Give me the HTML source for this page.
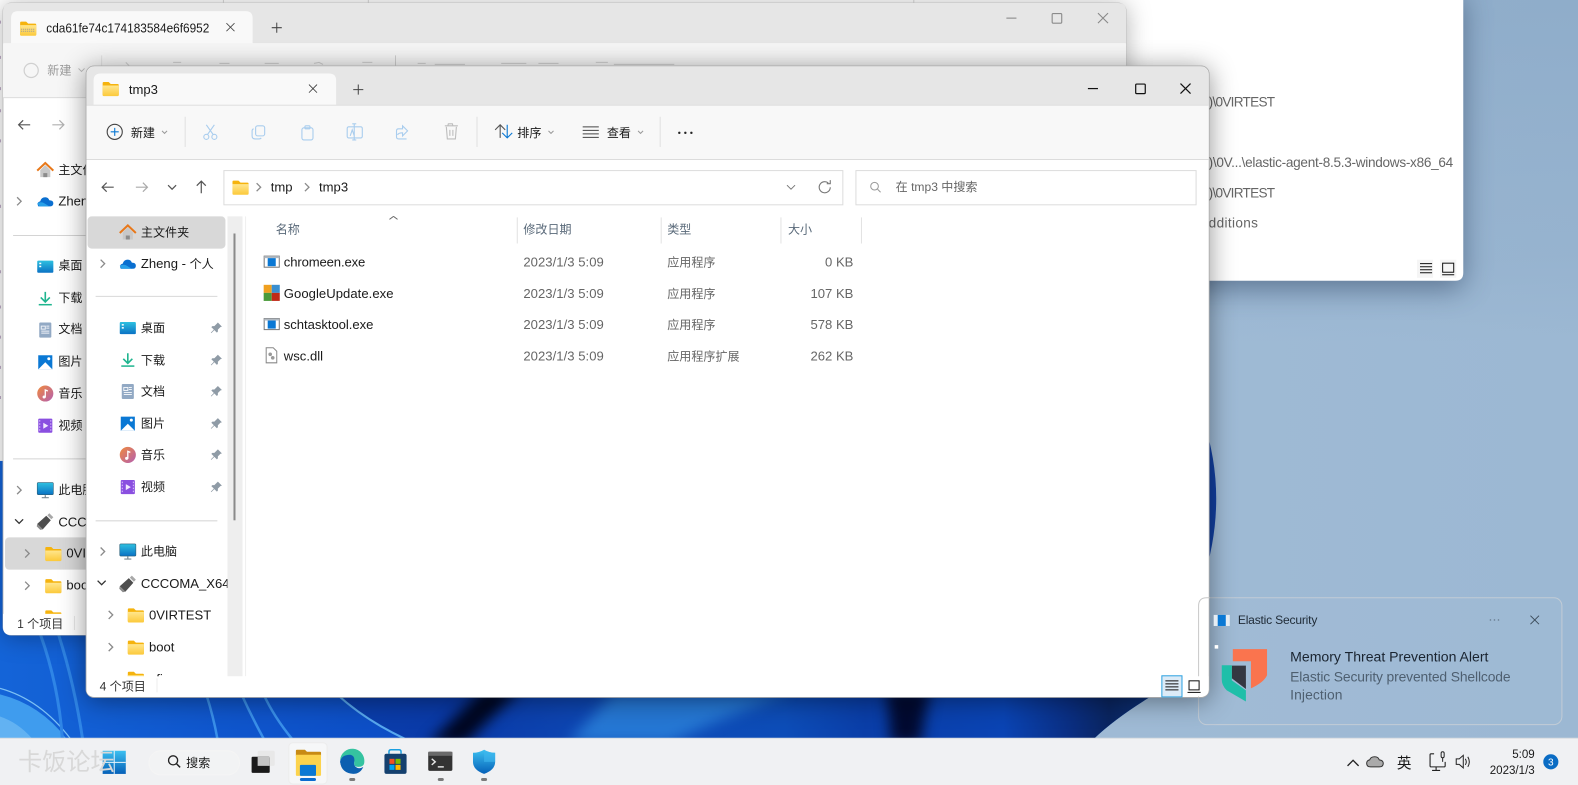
<!DOCTYPE html>
<html><head><meta charset="utf-8"><title>tmp3</title>
<style>
html,body{margin:0;padding:0;background:#a0bbd5;overflow:hidden}
svg{display:block;position:absolute;left:0;top:0}
text{font-family:"Liberation Sans","Noto Sans CJK SC",sans-serif;font-size:13px;fill:#1a1a1a}
.g{fill:#666}.c{font-size:12px}
.i{fill:none;stroke:#555;stroke-width:1.2}
</style></head><body>
<svg width="1578" height="785" viewBox="0 0 1568 780" xmlns="http://www.w3.org/2000/svg">
<defs>
<linearGradient id="wp" x1="0" x2="1" y1="0" y2="0"><stop offset="0" stop-color="#a6c0da"/><stop offset="1" stop-color="#9cb8d3"/></linearGradient>
<linearGradient id="top" x1="0" x2="0" y1="0" y2="1"><stop offset="0" stop-color="#7f9fbf" stop-opacity=".45"/><stop offset=".75" stop-color="#8aa8c6" stop-opacity=".3"/><stop offset="1" stop-color="#8aa8c6" stop-opacity="0"/></linearGradient>
<linearGradient id="bandL" x1="0" x2="1" y1="0" y2="0">
<stop offset="0" stop-color="#1464d8"/><stop offset=".2" stop-color="#0f55cc"/><stop offset=".37" stop-color="#0c4cc4"/><stop offset=".5" stop-color="#1a68d8"/><stop offset="1" stop-color="#1a70d8"/></linearGradient>
<linearGradient id="bandR" gradientUnits="userSpaceOnUse" x1="337" x2="1142" y1="0" y2="0">
<stop offset="0" stop-color="#0a3eac"/><stop offset=".14" stop-color="#0a3aa8"/><stop offset=".33" stop-color="#0e48b4"/><stop offset=".55" stop-color="#0d4db8"/><stop offset=".65" stop-color="#0a3ea8"/><stop offset=".82" stop-color="#0a44b4"/><stop offset=".9" stop-color="#0a2f84"/><stop offset=".95" stop-color="#0a2560"/><stop offset="1" stop-color="#0c2f74"/></linearGradient>
<linearGradient id="fo" x1="0" x2="0" y1="0" y2="1"><stop offset="0" stop-color="#ffe68e"/><stop offset="1" stop-color="#fcc93a"/></linearGradient>
<linearGradient id="bl" x1="0" x2="0" y1="0" y2="1"><stop offset="0" stop-color="#2ec0e0"/><stop offset="1" stop-color="#0a72c4"/></linearGradient>
<linearGradient id="mu" x1="0" x2="1" y1="0" y2="1"><stop offset="0" stop-color="#f08a3c"/><stop offset="1" stop-color="#b45fb0"/></linearGradient>
<linearGradient id="sh" x1="0" x2="0" y1="0" y2="1"><stop offset="0" stop-color="#3cc0f0"/><stop offset="1" stop-color="#0560b8"/></linearGradient>
<clipPath id="c1"><rect x="86" y="66" width="1115" height="627" rx="8"/></clipPath>
<clipPath id="c2"><rect x="86" y="560" width="140" height="40"/></clipPath>
<g id="fold"><path d="M0 2.500q0-1 1-1h5l2 2h7q1 0 1 1v9.500q0 1-1 1H1q-1 0-1-1z" fill="#f5b30e"/><path d="M0 5h16v9.500q0 1-1 1H1q-1 0-1-1z" fill="url(#fo)"/></g>
<path id="chev" d="M0 0l4 4-4 4" fill="none" stroke="#8a8a8a" stroke-width="1.300"/>
<path id="pin" d="M6.500 .5l4 4-1.500 .5-2.500 2.500v2l-1 1-2.500-2.500-3 3-.5-.5 3-3-2.500-2.500 1-1h2l2.500-2.500z" fill="#8f9ba6"/>
<g id="home"><path d="M3 8v7h10V8L8 3z" fill="#c8c8c8"/><path d="M6 15v-4h4v4z" fill="#8c8c8c"/><path d="M0 8.500L8 1l8 7.500" fill="none" stroke="#e8781a" stroke-width="2"/></g>
<g id="cld"><path d="M1 13q-2-4 2-5 1-4 5-4 3 0 4 3 4 0 4 3 0 3-3 3z" fill="#0a6fd0"/><path d="M0 10q4-2 7 0l5 3H2z" fill="#28a0e8"/></g>
<g id="desk"><rect x="0" y="2" width="16" height="12" rx="1" fill="url(#bl)"/><rect x="2" y="4" width="2" height="1.500" fill="#fff"/><rect x="2" y="7" width="2" height="1.500" fill="#fff"/></g>
<g id="dl"><path d="M8 1v9M3.500 6.500L8 11l4.500-4.500" fill="none" stroke="#1fb58f" stroke-width="1.600"/><rect x="1.500" y="13" width="13" height="1.500" fill="#1fb58f"/></g>
<g id="doc"><rect x="2" y=".5" width="12" height="15" rx="1" fill="#92a9c4"/><path d="M4 4h4v3H4zM9 4h3M9 6h3M4 9h8M4 11h8" stroke="#eef2f7" fill="none"/></g>
<g id="pic"><rect x="1" y="1" width="14" height="14" fill="#0a78d4"/><path d="M1 15l7-7 7 7z" fill="#fff"/><circle cx="11.500" cy="4.500" r="1.500" fill="#fff"/></g>
<g id="mus"><circle cx="8" cy="8" r="8" fill="url(#mu)"/><path d="M8 12V4.500l2.500 1" fill="none" stroke="#fff" stroke-width="1.300"/><circle cx="6.800" cy="11.500" r="1.500" fill="#fff"/></g>
<g id="vid"><rect x="1" y="1" width="14" height="14" rx="1" fill="#8a4fe0"/><path d="M6 5l5 3-5 3z" fill="#f2e8ff"/><path d="M2.500 2.500v11M13.500 2.500v11" stroke="#d9c4fb" stroke-dasharray="1.500 1.500"/></g>
<g id="pc"><rect x="0" y=".5" width="16" height="12" rx="1" fill="url(#bl)" stroke="#2a5f78" stroke-width=".6"/><path d="M8 13v2M4.500 15.500h7" stroke="#7a8a94" stroke-width="1.200"/></g>
<g id="usb"><path d="M0 11.500L9 3.500l4.500 4.500-8 9z" fill="#4e4e4e" transform="translate(0 -1)"/><path d="M10 2l2-2 4 4-2 2z" fill="#a8a8a8"/><path d="M0 10.500l5.500 5.500-2.500 .5-3.500-3.500z" fill="#8a8a8a"/></g>
<g id="exe"><rect x=".5" y="2.500" width="15" height="11" fill="#fff" stroke="#777"/><rect x=".5" y="2.500" width="15" height="2" fill="#b0b8c0"/><rect x="4" y="4.500" width="8" height="8" fill="#0a78d4"/></g>
<path id="x" d="M-5-5L5 5M5-5L-5 5" fill="none"/>
</defs>

<!-- wallpaper -->
<rect width="1568" height="780" fill="url(#wp)"/>
<rect x="1190" y="0" width="378" height="340" fill="url(#top)"/>
<path d="M1195 415Q1222 495 1195 578z" fill="#123fa0"/>
<path d="M0 440H1190L1142 693Q1108 714 1087 734H0z" fill="url(#bandL)"/>
<path d="M337 640V693Q365 715 405 734H1087Q1108 714 1142 693L1190 640z" fill="url(#bandR)"/>
<path d="M480 685H518Q488 712 462 740H425Q452 712 480 685Z" fill="#00061f" style="filter:blur(7px)"/>
<path d="M880 685H925Q918 712 915 740H885Q884 712 880 685Z" fill="#020a30" style="filter:blur(7px)"/>
<path d="M610 688H785Q720 712 665 738H565Z" fill="#2a80da" opacity=".85" style="filter:blur(7px)"/>
<path d="M0 690Q40 700 66 734H0z" fill="#3f9cee"/>
<path d="M0 712Q18 718 32 734H0z" fill="#62b2f2"/>
<path d="M0 684Q40 695 70 734" fill="none" stroke="#7cc0f4" stroke-width="1.200"/>
<path d="M40 630Q58 680 62 734M58 630Q74 680 82 734" fill="none" stroke="#2f85e6" stroke-width="3"/>
<path d="M205 690Q212 712 216 734M240 690Q250 712 262 734M262 690Q272 712 290 734" fill="none" stroke="#3a90ea" stroke-width="2.500"/>
<path d="M335 690Q362 715 402 734" fill="none" stroke="#58a8ee" stroke-width="2"/>

<!-- rearmost window -->
<g style="filter:drop-shadow(0 8px 14px rgba(20,40,70,.45))"><path d="M-10-10H1454V271q0 8-8 8H-10z" fill="#fff"/></g>
<path d="M222 0v4M366 0v4M908 0v4" stroke="#d8d8d8"/>
<text class="g" x="1201" y="106" textLength="66" style="font-size:13.500px">)\0VIRTEST</text>
<text class="g" x="1201" y="166" textLength="243" style="font-size:13.500px">)\0V...\elastic-agent-8.5.3-windows-x86_64</text>
<text class="g" x="1201" y="196" textLength="66" style="font-size:13.500px">)\0VIRTEST</text>
<text class="g" x="1201" y="226" textLength="49" style="font-size:13.500px">dditions</text>
<rect x="1408" y="258" width="16" height="18" fill="#f5f5f5"/><rect x="1431" y="258" width="16" height="18" fill="#f5f5f5"/>
<path d="M1411 262h12M1411 265h12M1411 268h12M1411 271h12" stroke="#111"/><rect x="1433.500" y="261.500" width="11" height="9" fill="none" stroke="#111"/><path d="M1433 273h12" stroke="#111"/>

<!-- left sliver window -->
<rect x="0" y="0" width="6" height="458" fill="#fff"/>
<path d="M0 22h1M0 57h1M0 88h1M0 110h1M0 140h1M0 205h1M0 270h1M0 305h1M0 335h1M0 365h1M0 395h1" stroke="#8a6a9a" stroke-width="3" opacity=".55"/>

<!-- window 1 -->
<g style="filter:drop-shadow(0 2px 12px rgba(0,0,0,.3))"><rect x="3" y="3" width="1116" height="628" rx="8" fill="#fff" stroke="#b5b5b5" stroke-width=".8"/></g>
<path d="M3 43V11q0-8 8-8H1111q8 0 8 8V43z" fill="#e6e6e6"/>
<rect x="3" y="43" width="1116" height="54" fill="#f6f6f6"/>
<path d="M3 97H1119" stroke="#dcdcdc"/>
<path d="M11 43V18q0-7 7-7H244q7 0 7 7V43z" fill="#f9f9f9"/>
<g transform="translate(20 20)"><path d="M0 2.500q0-1 1-1h5l2 2h7q1 0 1 1v9.500q0 1-1 1H1q-1 0-1-1z" fill="#f5b30e"/><path d="M0 5h16v9.500q0 1-1 1H1q-1 0-1-1z" fill="url(#fo)"/><path d="M1 9h14M1 11h14" stroke="#999" stroke-dasharray="1 1"/></g>
<text x="46" y="32.500" textLength="162" lengthAdjust="spacingAndGlyphs">cda61fe74c174183584e6f6952</text>
<use href="#x" transform="translate(229 27) scale(.8)" stroke="#444"/>
<path d="M270 27.500h10M275 22.500v10" stroke="#444" stroke-width="1"/>
<circle cx="31" cy="70" r="7" fill="none" stroke="#d0d0d0" stroke-width="1.200"/>
<text class="c" x="47" y="74" style="fill:#9a9a9a">新建</text>
<path d="M78 68l3 3 3-3" fill="none" stroke="#bbb"/>
<path d="M101 55v30" stroke="#e2e2e2"/>
<path d="M125 62l6 6M172 62h8M218 63h10M263 63h14M312 63l5-1 4 2M360 62h10M393 55v15M415 63h8M432 64h30M498 63h25M535 63h20M592 62h12M610 64h60" stroke="#cfcfcf" stroke-width="1" fill="none"/>
<path d="M1000 18h10" stroke="#8a8a8a" stroke-width="1.100"/>
<rect x="1045.500" y="13.500" width="9.500" height="9.500" rx="1" fill="none" stroke="#8a8a8a" stroke-width="1.100"/>
<use href="#x" transform="translate(1096 18)" stroke="#8a8a8a" stroke-width="1.100"/>
<path d="M30 124H18.500m4.500-4.500L18.500 124l4.500 4.500" class="i"/>
<path d="M52 124h11.500M59 119.500l4.500 4.500-4.500 4.500" fill="none" stroke="#b0b0b0" stroke-width="1.200"/>
<use href="#home" x="37" y="161"/><text class="c" x="58" y="173">主文件夹</text>
<use href="#chev" x="17" y="196"/><use href="#cld" x="37" y="192"/><text x="58" y="204">Zheng</text>
<path d="M13 234H85" stroke="#d4d4d4"/>
<use href="#desk" x="37" y="257"/><text class="c" x="58" y="268">桌面</text>
<use href="#dl" x="37" y="289"/><text class="c" x="58" y="300">下载</text>
<use href="#doc" x="37" y="320"/><text class="c" x="58" y="331">文档</text>
<use href="#pic" x="37" y="352"/><text class="c" x="58" y="363">图片</text>
<use href="#mus" x="37" y="383"/><text class="c" x="58" y="395">音乐</text>
<use href="#vid" x="37" y="415"/><text class="c" x="58" y="427">视频</text>
<path d="M13 456H85" stroke="#d4d4d4"/>
<use href="#chev" x="17" y="483"/><use href="#pc" x="37" y="479"/><text class="c" x="58" y="491">此电脑</text>
<path d="M15 516l4 4 4-4" fill="none" stroke="#333" stroke-width="1.300"/><use href="#usb" x="37" y="510"/><text x="58" y="523">CCCOMA</text>
<rect x="5" y="534" width="95" height="32" rx="4" fill="#d8d8d8"/>
<use href="#chev" x="25" y="546"/><use href="#fold" x="45" y="542"/><text x="66" y="554">0VIRTEST</text>
<use href="#chev" x="25" y="578"/><use href="#fold" x="45" y="574"/><text x="66" y="586">boot</text>
<use href="#fold" x="45" y="605"/>
<path d="M3 610H100V631H11q-8 0-8-8z" fill="#fff"/>
<text class="c" x="17" y="624" style="fill:#333">1 个项目</text>
<path d="M74 612v14" stroke="#e8e8e8"/>

<!-- notification outline (beneath front window content edge) -->
<rect x="1191" y="594" width="361" height="126" rx="8" fill="#a4bdd7" fill-opacity=".35" stroke="#c2ccd6"/>

<!-- front window -->
<g style="filter:drop-shadow(0 3px 13px rgba(0,0,0,.42))"><rect x="85.500" y="65.500" width="1116" height="627.500" rx="8" fill="#fff" stroke="#aaa" stroke-width=".8"/></g>
<path d="M1191 602q0-8 8-8h3M1191 602V693" fill="none" stroke="#c8c8c8"/>
<g clip-path="url(#c1)">
<rect x="85" y="65" width="1117" height="39" fill="#e6e6e6"/>
<rect x="85" y="104" width="1117" height="54" fill="#f8f8f8"/>
<path d="M85 104.500H1202" stroke="#dcdcdc"/><path d="M85 158.500H1202" stroke="#dcdcdc"/>
<path d="M93 104V80q0-7 7-7H327q7 0 7 7V104z" fill="#f9f9f9"/>
</g>
<use href="#fold" x="102" y="80"/>
<text x="128" y="93.500">tmp3</text>
<use href="#x" transform="translate(311 88) scale(.8)" stroke="#333"/>
<path d="M351 89h10M356 84v10" stroke="#444"/>
<path d="M1081 88h10" stroke="#111" stroke-width="1.200"/>
<rect x="1128.500" y="83.500" width="9.500" height="9.500" rx="1" fill="none" stroke="#111" stroke-width="1.200"/>
<use href="#x" transform="translate(1178 88)" stroke="#111" stroke-width="1.200"/>
<!-- toolbar -->
<circle cx="114" cy="131" r="7.500" fill="none" stroke="#444" stroke-width="1.100"/><path d="M110 131h8M114 127v8" stroke="#0a78d4" stroke-width="1.100"/>
<text class="c" x="130" y="136">新建</text><path d="M161 130l2.500 2.500 2.500-2.500" fill="none" stroke="#999"/>
<path d="M184 116v30" stroke="#e0e0e0"/>
<g fill="none" stroke="#a9cdee" stroke-width="1.100">
<path d="M205 124l7 10M213 124l-7 10"/><circle cx="205" cy="136" r="2.500"/><circle cx="213" cy="136" r="2.500"/>
<rect x="254" y="125" width="9" height="10" rx="2"/><path d="M252 128q-1.500 .5-1.500 2v5q0 3 3 3h4q1.500 0 2-1"/>
<rect x="300" y="127" width="11" height="12" rx="2"/><rect x="303" y="125" width="5" height="3" rx="1"/>
<rect x="345" y="126" width="15" height="11" rx="1.500"/><path d="M352 123v16M350 123h4M350 139h4M348 135l2-6 2 6"/>
<path d="M394 134v-4q0-2 2-2h4v-3l5 5-5 5v-3q-4 0-5 2M394 130v6q0 2 2 2h8"/>
</g>
<path d="M442 125h13M445 125l.5-2h4l.5 2M443.500 126l1 12h8l1-12M447 129v6M450 129v6" fill="none" stroke="#bdbdbd" stroke-width="1.100"/>
<path d="M474 116v30" stroke="#e0e0e0"/>
<path d="M497 137v-13m-5 5l5-5 5 5" fill="none" stroke="#555" stroke-width="1.100"/><path d="M502 124v13m-5-5l5 5 5-5" fill="none" stroke="#0a78d4" stroke-width="1.100" transform="translate(2 0)"/>
<text class="c" x="514" y="136">排序</text><path d="M545 130l2.500 2.500 2.500-2.500" fill="none" stroke="#999"/>
<path d="M579 126h16M579 129.500h16M579 133h16M579 136.500h16" stroke="#444"/>
<text class="c" x="603" y="136">查看</text><path d="M634 130l2.500 2.500 2.500-2.500" fill="none" stroke="#999"/>
<path d="M656 116v30" stroke="#e0e0e0"/>
<g fill="#222"><circle cx="675" cy="132" r="1.200"/><circle cx="681" cy="132" r="1.200"/><circle cx="687" cy="132" r="1.200"/></g>
<!-- nav -->
<path d="M113 186H101.500m4.500-4.500l-4.500 4.500 4.500 4.500" class="i"/>
<path d="M135 186h11.500M142 181.500l4.500 4.500-4.500 4.500" fill="none" stroke="#aaa" stroke-width="1.200"/>
<path d="M167 184l4 4 4-4" class="i"/>
<path d="M200 192v-12m-4.500 4.500l4.500-4.500 4.500 4.500" class="i"/>
<rect x="222.500" y="169.500" width="615" height="34" fill="#fff" stroke="#dcdcdc"/>
<use href="#fold" x="231" y="178"/>
<use href="#chev" x="255" y="182"/>
<text x="269" y="190.500">tmp</text>
<use href="#chev" x="303" y="182"/>
<text x="317" y="190.500">tmp3</text>
<path d="M782 184l4 4 4-4" fill="none" stroke="#777"/>
<path d="M825 186a5.500 5.500 0 1 1-2-4.200M825 179v3.500h-3.500" fill="none" stroke="#777" stroke-width="1.100"/>
<rect x="850.500" y="169.500" width="338" height="34" fill="#fff" stroke="#dcdcdc"/>
<circle cx="869" cy="185" r="3.800" fill="none" stroke="#999"/><path d="M872 188l3 3" stroke="#999"/>
<text class="c g" x="890" y="190">在 tmp3 中搜索</text>
<!-- columns -->
<path d="M391 215l-4 3M391 215l4 3" stroke="#666" fill="none"/>
<text class="c g" x="274" y="232" style="fill:#5a6a7a">名称</text>
<text class="c g" x="520" y="232" style="fill:#5a6a7a">修改日期</text>
<text class="c g" x="663" y="232" style="fill:#5a6a7a">类型</text>
<text class="c g" x="783" y="232" style="fill:#5a6a7a">大小</text>
<path d="M514 216v26M657 216v26M776 216v26M856 216v26" stroke="#e2e2e2"/>
<!-- rows -->
<use href="#exe" x="262" y="252"/><text x="282" y="265" textLength="81">chromeen.exe</text>
<text class="g" x="520" y="265" textLength="80">2023/1/3 5:09</text><text class="c g" x="663" y="265">应用程序</text><text class="g" x="848" y="265" text-anchor="end">0 KB</text>
<g transform="translate(262 283)"><rect x="0" y="0" width="8" height="8" fill="#f0a020"/><rect x="8" y="0" width="8" height="8" fill="#3a8fd0"/><rect x="0" y="8" width="8" height="8" fill="#4a9a3a"/><rect x="8" y="8" width="8" height="8" fill="#c02a18"/></g>
<text x="282" y="296" textLength="109">GoogleUpdate.exe</text>
<text class="g" x="520" y="296" textLength="80">2023/1/3 5:09</text><text class="c g" x="663" y="296">应用程序</text><text class="g" x="848" y="296" text-anchor="end">107 KB</text>
<use href="#exe" x="262" y="314"/><text x="282" y="327" textLength="89">schtasktool.exe</text>
<text class="g" x="520" y="327" textLength="80">2023/1/3 5:09</text><text class="c g" x="663" y="327">应用程序</text><text class="g" x="848" y="327" text-anchor="end">578 KB</text>
<g transform="translate(264 345)"><path d="M.5 .5h7l3.500 3.500v11.500H.5z" fill="#fff" stroke="#888"/><circle cx="4.500" cy="7" r="1.800" fill="#999"/><circle cx="7" cy="10.500" r="1.800" fill="#999"/></g>
<text x="282" y="358">wsc.dll</text>
<text class="g" x="520" y="358" textLength="80">2023/1/3 5:09</text><text class="c g" x="663" y="358">应用程序扩展</text><text class="g" x="848" y="358" text-anchor="end">262 KB</text>
<!-- sidebar -->
<rect x="87" y="215" width="137" height="32" rx="4" fill="#d8d8d8"/>
<use href="#home" x="119" y="223"/><text class="c" x="140" y="235">主文件夹</text>
<use href="#chev" x="100" y="258"/><use href="#cld" x="119" y="254"/><text x="140" y="266.500">Zheng - <tspan class="c">个人</tspan></text>
<path d="M95 294.500H216" stroke="#d8d8d8"/>
<use href="#desk" x="119" y="318"/><text class="c" x="140" y="330">桌面</text><use href="#pin" x="210" y="320"/>
<use href="#dl" x="119" y="350"/><text class="c" x="140" y="362">下载</text><use href="#pin" x="210" y="352"/>
<use href="#doc" x="119" y="381"/><text class="c" x="140" y="393">文档</text><use href="#pin" x="210" y="383"/>
<use href="#pic" x="119" y="413"/><text class="c" x="140" y="425">图片</text><use href="#pin" x="210" y="415"/>
<use href="#mus" x="119" y="444"/><text class="c" x="140" y="456">音乐</text><use href="#pin" x="210" y="446"/>
<use href="#vid" x="119" y="476"/><text class="c" x="140" y="488">视频</text><use href="#pin" x="210" y="478"/>
<path d="M95 517.500H216" stroke="#d8d8d8"/>
<use href="#chev" x="100" y="544"/><use href="#pc" x="119" y="540"/><text class="c" x="140" y="552">此电脑</text>
<path d="M97 577l4 4 4-4" fill="none" stroke="#333" stroke-width="1.300"/><use href="#usb" x="119" y="572"/><g clip-path="url(#c2)"><text x="140" y="584.500">CCCOMA_X64FRE</text></g>
<use href="#chev" x="108" y="607"/><use href="#fold" x="127" y="603"/><text x="148" y="615.500">0VIRTEST</text>
<use href="#chev" x="108" y="639"/><use href="#fold" x="127" y="635"/><text x="148" y="647.500">boot</text>
<use href="#fold" x="127" y="666"/><text x="148" y="679">efi</text>
<rect x="226" y="215" width="15" height="458" fill="#eeeeee"/>
<rect x="232" y="232" width="2" height="285" fill="#8a8a8a"/>
<path d="M244 215V672" stroke="#f0f0f0"/>
<path d="M86 672H1201V685q0 7-7 7H93q-7 0-7-7z" fill="#fff"/>
<text class="c" x="99" y="686" style="fill:#333">4 个项目</text>
<path d="M156 674v14" stroke="#eee"/>
<rect x="1154.500" y="671.500" width="20" height="21" fill="#dcebf7" stroke="#2aa0e0"/>
<path d="M1158 676.500h13M1158 679.500h13M1158 682.500h13M1158 685.500h13" stroke="#111"/>
<rect x="1181.500" y="676.500" width="10" height="9" fill="#fff" stroke="#111"/><path d="M1180 688h13" stroke="#111"/>

<!-- notification content -->
<rect x="1206" y="611" width="16" height="11" fill="#e6edf4"/><rect x="1210" y="611" width="8" height="11" fill="#0a78d4"/>
<text x="1230" y="620" textLength="79" style="font-size:12px;fill:#1f2a36">Elastic Security</text>
<g fill="#6a7f92"><circle cx="1481" cy="616" r=".8"/><circle cx="1485" cy="616" r=".8"/><circle cx="1489" cy="616" r=".8"/></g>
<use href="#x" transform="translate(1525 616) scale(.85)" stroke="#3a4a58" stroke-width="1.100"/>
<rect x="1207" y="641" width="3.500" height="3.500" fill="#fff"/>
<path d="M1225 645H1259V671Q1256 678 1243 684V657H1225Z" fill="#fa744e"/>
<path d="M1224 661.400H1238V684.600L1224 674Z" fill="#343741"/>
<path d="M1214 661H1224V676L1238 686V697L1219 686Q1214 681 1214 675Z" fill="#1fbfa9"/>
<text x="1282" y="657.500" textLength="197" style="font-size:14px;fill:#1a2430">Memory Threat Prevention Alert</text>
<text x="1282" y="677" textLength="219" style="font-size:13.800px;fill:#4e5f70">Elastic Security prevented Shellcode</text>
<text x="1282" y="695" textLength="52" style="font-size:13.800px;fill:#4e5f70">Injection</text>

<!-- taskbar -->
<rect x="0" y="733.500" width="1568" height="47" fill="#f0f1f3"/>
<path d="M0 733.500H1568" stroke="#d9dde2"/>
<rect x="102" y="746" width="23" height="23" fill="url(#sh)"/><path d="M113.500 746v23M102 757.500h23" stroke="#e8f4fc"/>
<text x="18" y="765" style="font-size:24px;fill:#d8d8d8">卡饭论坛</text>
<rect x="148" y="746" width="90" height="24" rx="12" fill="#f2f3f4" stroke="#f5f5f5"/>
<circle cx="172" cy="755.500" r="4.500" fill="none" stroke="#222" stroke-width="1.300"/><path d="M175.500 759l3.500 3.500" stroke="#222" stroke-width="1.500"/>
<text class="c" x="185" y="762">搜索</text>
<!-- task view -->
<rect x="256" y="746" width="17" height="15" rx="1.500" fill="#e8e8e8"/><rect x="250" y="752" width="18" height="16" rx="1" fill="#1a1a1a"/><rect x="256" y="752" width="12" height="9" fill="#c4c4c4"/>
<!-- explorer -->
<rect x="287" y="738" width="38" height="41" rx="4" fill="#f6f7f8" stroke="#ececec"/>
<path d="M294 746q0-1 1-1h8l2 2h13q1 0 1 1v3h-25z" fill="#c88a14"/>
<path d="M294 750h25v20q0 1-1 1h-23q-1 0-1-1z" fill="#fcd34d"/>
<rect x="298" y="760" width="16" height="11" rx="1" fill="#0a78d4"/>
<rect x="298" y="773" width="16" height="3" rx="1.500" fill="#0a6cd0"/>
<!-- edge -->
<path d="M338 757a12 12 0 0 1 23-4q1 5-4 6-5 0-5-3 0-4-4-4-5 0-6 5-.5 8 8 10-10 1-12-10z" fill="#1a75c8"/>
<path d="M338 755a12 12 0 0 1 24 2q0 5-6 5-5 0-4-5 0-4-5-4-6 0-9 2z" fill="#35c3a0"/>
<path d="M338 757q1-7 10-7 5 1 4 7-1 4 3 6 3 1 6-1-3 7-10 7-12-1-13-12z" fill="#0c5fb0"/>
<rect x="347" y="773" width="6" height="3" rx="1.500" fill="#7a7a7a"/>
<!-- store -->
<path d="M386.500 749v-2q0-2 2-2h8q2 0 2 2v2" fill="none" stroke="#1a9fe0" stroke-width="1.500"/>
<rect x="382" y="749" width="22" height="20" rx="2" fill="#14406e"/>
<rect x="387" y="754" width="5" height="5" fill="#f25022"/><rect x="393" y="754" width="5" height="5" fill="#7fba00"/><rect x="387" y="760" width="5" height="5" fill="#00a4ef"/><rect x="393" y="760" width="5" height="5" fill="#ffb900"/>
<!-- terminal -->
<rect x="425.500" y="747" width="24" height="19" rx="1.500" fill="#333"/><rect x="425.500" y="747" width="24" height="4" fill="#6a6a6a"/>
<path d="M429 754l3.500 3-3.500 3" fill="none" stroke="#e8e8e8" stroke-width="1.400"/><path d="M435 762h6" stroke="#e8e8e8" stroke-width="1.400"/>
<rect x="435" y="773" width="6" height="3" rx="1.500" fill="#7a7a7a"/>
<!-- shield -->
<path d="M481 745q5 3 11 3v9q0 8-11 12-11-4-11-12v-9q6 0 11-3z" fill="url(#sh)"/><path d="M481 745q5 3 11 3v9h-11z" fill="#40b8ee" opacity=".6"/>
<rect x="478" y="773" width="6" height="3" rx="1.500" fill="#7a7a7a"/>
<!-- tray -->
<path d="M1339 761l5.500-5.500 5.500 5.500" fill="none" stroke="#222" stroke-width="1.300"/>
<path d="M1362 762q-4 0-4-3.500 0-3 3-3.500 1-3 5-3 3.500 0 4.500 3 4 .5 4 3.500 0 3.500-4 3.500z" fill="#aaa" stroke="#333"/>
<text x="1388" y="763" style="font-size:14.500px">英</text>
<path d="M1425 749h-3a1 1 0 0 0-1 1v11a1 1 0 0 0 1 1h13a1 1 0 0 0 1-1v-4M1427 762v3M1423 765.500h8" fill="none" stroke="#222" stroke-width="1.100"/><rect x="1432" y="747" width="3" height="6" rx="1.500" fill="none" stroke="#222"/><path d="M1433.500 753v4" stroke="#222"/>
<path d="M1447 754h3l4-3.500v12.500l-4-3.500h-3z" fill="none" stroke="#222"/><path d="M1456 754q2 3 0 6M1458.500 752q3 5 0 10" fill="none" stroke="#222"/>
<text x="1525" y="753" text-anchor="end" style="font-size:11.500px">5:09</text>
<text x="1525" y="769" text-anchor="end" style="font-size:11.500px">2023/1/3</text>
<circle cx="1541" cy="757" r="7.500" fill="#0a6cc4"/><text x="1541" y="760.500" text-anchor="middle" style="font-size:10px;fill:#fff">3</text>
</svg>
</body></html>
